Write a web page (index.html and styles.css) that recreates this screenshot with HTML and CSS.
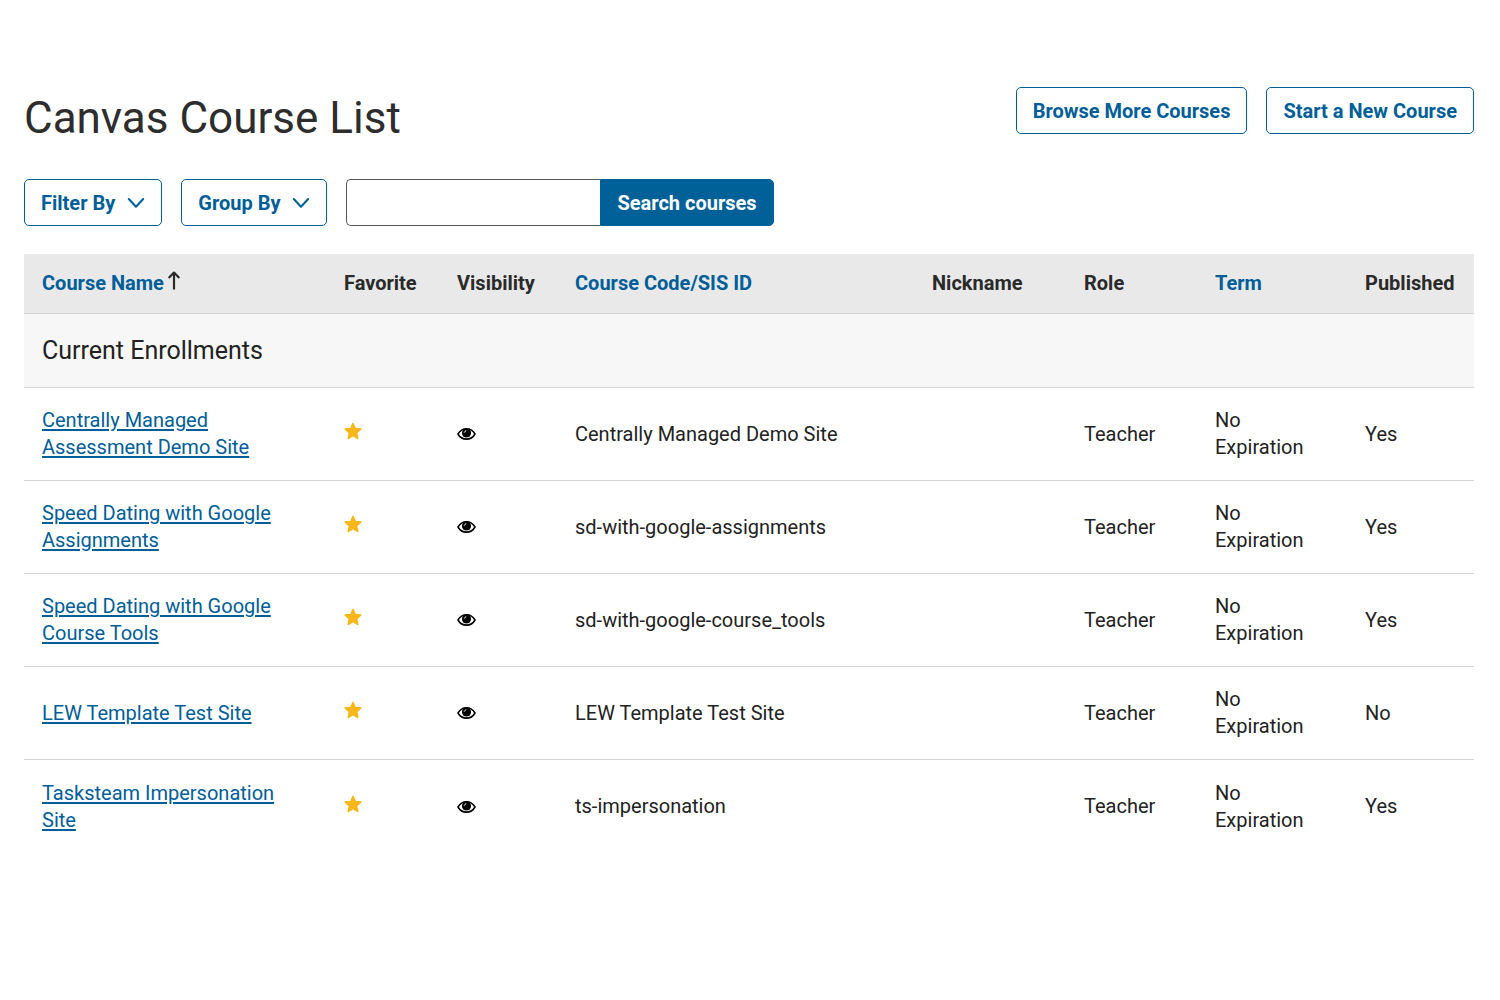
FILE: index.html
```html
<!DOCTYPE html>
<html lang="en">
<head>
    <meta charset="UTF-8">
    <meta name="viewport" content="width=device-width, initial-scale=1.0">
    <title>Canvas Course List</title>
    <link rel="stylesheet" href="styles.css">
</head>
<body>
    <svg class="sprite" aria-hidden="true">
        <symbol id="icon-star" viewBox="0 0 18 18">
            <path d="M9 1.300l2.300 5 5.700.6-4.200 3.900 1.100 5.800L9 13.800l-4.900 2.800 1.100-5.800L1 6.900l5.700-.6z" fill="#f7b718" stroke="#f7b718" stroke-width="1.300" stroke-linejoin="round"/>
        </symbol>
        <symbol id="icon-eye" viewBox="0 0 20 14">
            <path d="M1 7C3.200 3.200 6.300 1.400 10 1.400S16.800 3.200 19 7c-2.200 3.800-5.300 5.400-9 5.400S3.200 10.800 1 7z" fill="#fff" stroke="#000" stroke-width="1.600" stroke-linejoin="round"/>
            <circle cx="10" cy="6" r="4.800" fill="#000"/>
            <path d="M7.700 5.200a2.300 2.300 0 0 1 1.600-1.600" fill="none" stroke="#fff" stroke-width="1" stroke-linecap="round"/>
        </symbol>
        <symbol id="icon-chevron" viewBox="0 0 18 12">
            <path d="M1.800 2L9 9.800 16.200 2" fill="none" stroke="currentColor" stroke-width="2" stroke-linecap="round" stroke-linejoin="round"/>
        </symbol>
        <symbol id="icon-arrow" viewBox="0 0 14 20">
            <path d="M7 19.500V3M1.700 8L7 2.600 12.300 8" fill="none" stroke="currentColor" stroke-width="2.200" stroke-linejoin="round"/>
        </symbol>
    </svg>

    <main class="page">
        <header class="page-header">
            <h1>Canvas Course List</h1>
            <div class="actions">
                <button type="button" class="btn">Browse More Courses</button>
                <button type="button" class="btn">Start a New Course</button>
            </div>
        </header>

        <form class="toolbar">
            <button type="button" class="btn">Filter By <svg class="chevron" aria-hidden="true"><use href="#icon-chevron"/></svg></button>
            <button type="button" class="btn">Group By <svg class="chevron" aria-hidden="true"><use href="#icon-chevron"/></svg></button>
            <div class="search">
                <input type="text" id="courseSearch" aria-label="Search courses">
                <button type="submit" class="btn btn-primary">Search courses</button>
            </div>
        </form>

        <table class="courses">
            <colgroup>
                <col class="col-name">
                <col class="col-favorite">
                <col class="col-visibility">
                <col class="col-code">
                <col class="col-nickname">
                <col class="col-role">
                <col class="col-term">
                <col class="col-published">
            </colgroup>
            <thead>
                <tr>
                    <th aria-sort="ascending"><span class="sorted"><a href="#">Course Name</a><svg class="arrow" aria-hidden="true"><use href="#icon-arrow"/></svg></span></th>
                    <th>Favorite</th>
                    <th>Visibility</th>
                    <th><a href="#">Course Code/SIS ID</a></th>
                    <th>Nickname</th>
                    <th>Role</th>
                    <th><a href="#">Term</a></th>
                    <th>Published</th>
                </tr>
            </thead>
            <tbody>
                <tr class="group">
                    <td colspan="8">Current Enrollments</td>
                </tr>
                <tr>
                    <td><a href="#">Centrally Managed Assessment Demo Site</a></td>
                    <td><button type="button" class="icon-btn" aria-label="Favorite"><svg class="star"><use href="#icon-star"/></svg></button></td>
                    <td><svg class="eye"><use href="#icon-eye"/></svg></td>
                    <td>Centrally Managed Demo Site</td>
                    <td></td>
                    <td>Teacher</td>
                    <td>No Expiration</td>
                    <td>Yes</td>
                </tr>
                <tr>
                    <td><a href="#">Speed Dating with Google Assignments</a></td>
                    <td><button type="button" class="icon-btn" aria-label="Favorite"><svg class="star"><use href="#icon-star"/></svg></button></td>
                    <td><svg class="eye"><use href="#icon-eye"/></svg></td>
                    <td>sd-with-google-assignments</td>
                    <td></td>
                    <td>Teacher</td>
                    <td>No Expiration</td>
                    <td>Yes</td>
                </tr>
                <tr>
                    <td><a href="#">Speed Dating with Google Course Tools</a></td>
                    <td><button type="button" class="icon-btn" aria-label="Favorite"><svg class="star"><use href="#icon-star"/></svg></button></td>
                    <td><svg class="eye"><use href="#icon-eye"/></svg></td>
                    <td>sd-with-google-course_tools</td>
                    <td></td>
                    <td>Teacher</td>
                    <td>No Expiration</td>
                    <td>Yes</td>
                </tr>
                <tr>
                    <td><a href="#">LEW Template Test Site</a></td>
                    <td><button type="button" class="icon-btn" aria-label="Favorite"><svg class="star"><use href="#icon-star"/></svg></button></td>
                    <td><svg class="eye"><use href="#icon-eye"/></svg></td>
                    <td>LEW Template Test Site</td>
                    <td></td>
                    <td>Teacher</td>
                    <td>No Expiration</td>
                    <td>No</td>
                </tr>
                <tr>
                    <td><a href="#">Tasksteam Impersonation Site</a></td>
                    <td><button type="button" class="icon-btn" aria-label="Favorite"><svg class="star"><use href="#icon-star"/></svg></button></td>
                    <td><svg class="eye"><use href="#icon-eye"/></svg></td>
                    <td>ts-impersonation</td>
                    <td></td>
                    <td>Teacher</td>
                    <td>No Expiration</td>
                    <td>Yes</td>
                </tr>
            </tbody>
        </table>
    </main>
</body>
</html>
```

FILE: styles.css
```css
* {
    box-sizing: border-box;
}

body {
    margin: 0;
    background-color: #fff;
    color: #222;
    font-family: Roboto, "Liberation Sans", sans-serif;
    font-size: 20px;
    line-height: 27px;
}

a {
    color: #005e99;
}

.sprite {
    display: none;
}

.page {
    padding: 87px 26px 40px 24px;
}

.page-header {
    display: flex;
    justify-content: space-between;
    align-items: flex-start;
}

h1 {
    margin: 0;
    color: #2d2d2d;
    font-size: 44px;
    font-weight: 400;
    line-height: 62px;
}

.actions {
    display: flex;
    gap: 19px;
}

.btn {
    display: flex;
    align-items: center;
    gap: 12px;
    height: 47px;
    padding: 0 16px;
    background-color: #fff;
    border: 1px solid #005e99;
    border-radius: 5px;
    color: #005e99;
    font-family: inherit;
    font-size: 20px;
    font-weight: 700;
    white-space: nowrap;
    cursor: pointer;
}

.btn-primary {
    background-color: #006198;
    border-radius: 0 5px 5px 0;
    color: #fff;
}

.chevron {
    width: 18px;
    height: 12px;
}

.toolbar {
    display: flex;
    gap: 19px;
    margin: 30px 0 28px;
}

.search {
    display: flex;
}

.search input {
    width: 254px;
    height: 47px;
    padding: 0 12px;
    border: 1px solid #555;
    border-right: 0;
    border-radius: 5px 0 0 5px;
    font-family: inherit;
    font-size: 20px;
}

.courses {
    width: 100%;
    table-layout: fixed;
    border-collapse: separate;
    border-spacing: 0;
}

.col-name { width: 302px; }
.col-favorite { width: 113px; }
.col-visibility { width: 118px; }
.col-nickname { width: 152px; }
.col-role { width: 131px; }
.col-term { width: 150px; }
.col-published { width: 127px; }

th, td {
    padding: 0 18px;
    border-bottom: 1px solid #d5d5d5;
    text-align: left;
    vertical-align: middle;
}

th {
    height: 60px;
    padding-right: 0;
    background-color: #e9e9e9;
    color: #2a2a2a;
    font-weight: 700;
    white-space: nowrap;
}

th a {
    text-decoration: none;
}

td {
    height: 93px;
}

td a {
    text-underline-offset: 2px;
}

tr:last-child td {
    border-bottom: 0;
}

.group td {
    height: 74px;
    background-color: #f7f7f7;
    font-size: 25px;
}

.sorted {
    display: flex;
    align-items: flex-start;
    gap: 3px;
}

.arrow {
    width: 14px;
    height: 20px;
}

.icon-btn {
    display: block;
    padding: 0 0 6px;
    background: none;
    border: 0;
    cursor: pointer;
}

.star {
    display: block;
    width: 18px;
    height: 18px;
}

.eye {
    display: block;
    width: 19px;
    height: 14px;
}
```
